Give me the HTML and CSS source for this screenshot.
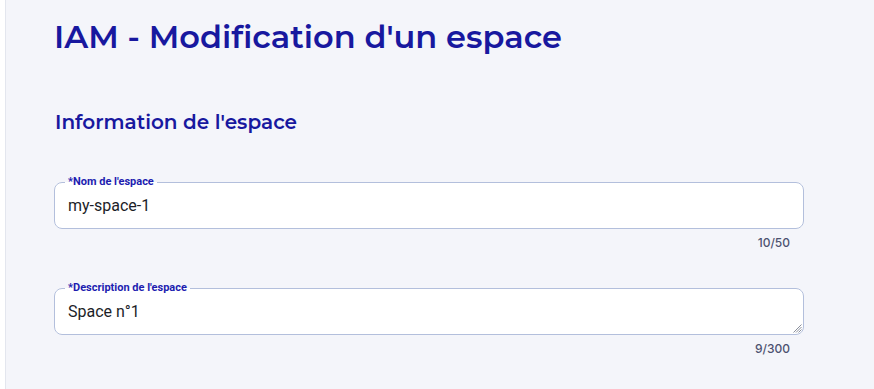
FILE: index.html
```html
<!DOCTYPE html>
<html lang="fr">
<head>
<meta charset="utf-8">
<title>IAM - Modification d'un espace</title>
<link rel="stylesheet" href="styles.css">
</head>
<body>
<div class="shell">
  <main class="page">
    <h1 class="title">IAM - Modification d'un espace</h1>
    <h2 class="section">Information de l'espace</h2>
    <div class="field">
      <fieldset class="box">
        <legend class="legend">*Nom de l'espace</legend>
        <input class="input" type="text" value="my-space-1">
      </fieldset>
      <div class="counter">10/50</div>
    </div>
    <div class="field">
      <fieldset class="box">
        <legend class="legend">*Description de l'espace</legend>
        <div class="input">Space n°1</div>
        <svg class="grip" width="9" height="9" viewBox="0 0 9 9"><path d="M8.5 0.5L0.5 8.5M8.5 3L3 8.5M8.5 5.5L5.5 8.5" stroke="#8a8f9c" stroke-width="1"/></svg>
      </fieldset>
      <div class="counter">9/300</div>
    </div>
  </main>
</div>
</body>
</html>
```
FILE: styles.css
```css
html, body { margin: 0; padding: 0; }
body {
  background: #ffffff;
  font-family: "Roboto", sans-serif;
  width: 874px;
  height: 389px;
  overflow: hidden;
}
.shell {
  margin-left: 5px;
  border-left: 1px solid #e3e6ee;
  background: #f4f5fa;
  height: 389px;
}
.page {
  padding: 17px 0 0 48px;
  width: 750px;
}
.title {
  margin: 0;
  font-family: "Montserrat", "Noto Sans", sans-serif;
  font-weight: 600;
  font-size: 32px;
  line-height: 40px;
  color: #18189f;
}
.section {
  margin: 52px 0 0 1px;
  font-family: "Montserrat", "Noto Sans", sans-serif;
  font-weight: 600;
  font-size: 20px;
  line-height: 26px;
  color: #18189f;
}
.field {
  margin-top: 41px;
}
.field + .field { margin-top: 32px; }
.box {
  position: relative;
  margin: 0;
  padding: 0 13px 12px 13px;
  border: 1px solid #b3bfdc;
  border-radius: 8px;
  background: #ffffff;
  min-width: 0;
}
.legend {
  padding: 0 3px;
  margin-left: -3px;
  font-family: "Roboto", sans-serif;
  font-weight: 700;
  font-size: 11px;
  line-height: 12px;
  color: #1d1db0;
}
.input {
  display: block;
  width: 100%;
  border: 0;
  outline: none;
  padding: 0;
  margin: 8px 0 0 0;
  font-family: "Roboto", sans-serif;
  font-size: 16px;
  line-height: 20px;
  height: 20px;
  color: #1c1e28;
  background: transparent;
}
.grip {
  position: absolute;
  right: 1px;
  bottom: 1px;
}
.counter {
  text-align: right;
  padding-right: 14px;
  margin-top: 7px;
  font-family: "Inter", sans-serif;
  font-size: 12px;
  font-weight: 500;
  line-height: 14px;
  color: #4d5270;
}
```
